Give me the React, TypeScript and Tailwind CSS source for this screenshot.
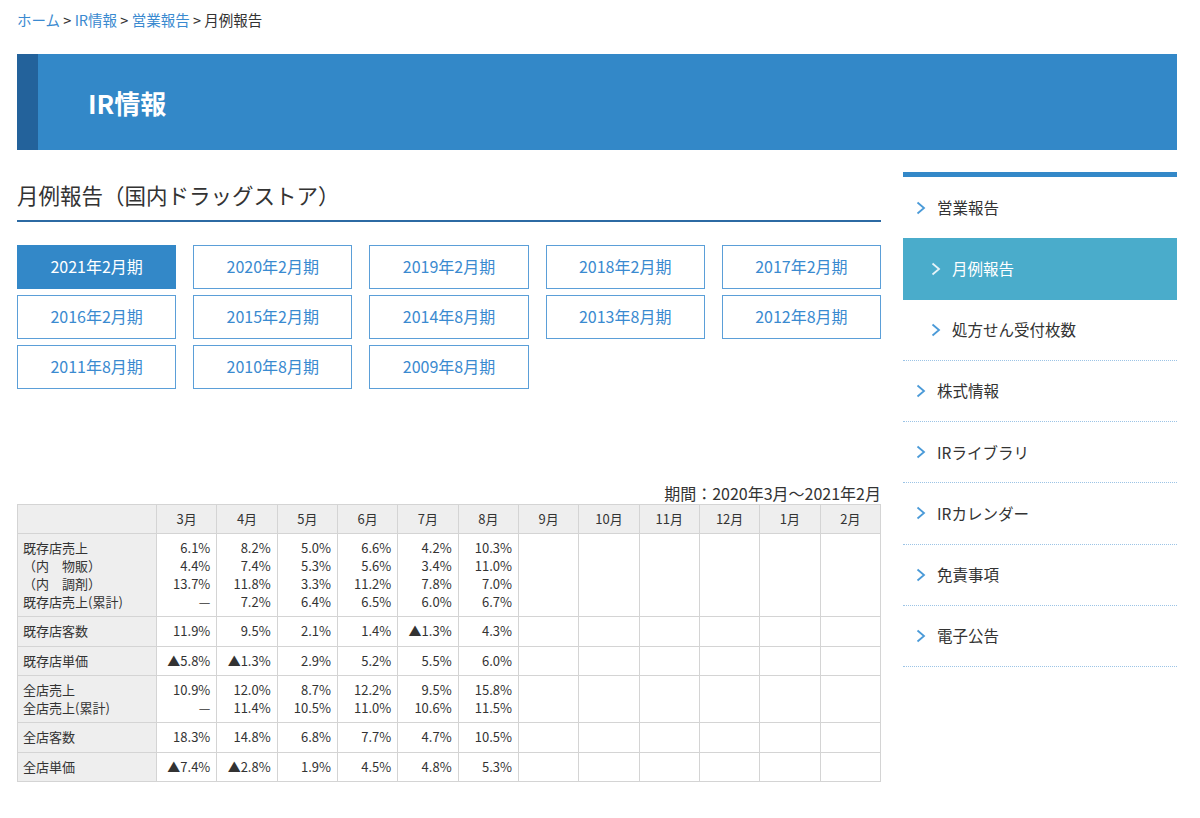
import React from 'react';

const years = [
  '2021年2月期', '2020年2月期', '2019年2月期', '2018年2月期', '2017年2月期',
  '2016年2月期', '2015年2月期', '2014年8月期', '2013年8月期', '2012年8月期',
  '2011年8月期', '2010年8月期', '2009年8月期',
];

const months = ['3月', '4月', '5月', '6月', '7月', '8月', '9月', '10月', '11月', '12月', '1月', '2月'];

const rows: { labels: string[]; values: string[][] }[] = [
  {
    labels: ['既存店売上', '（内　物販）', '（内　調剤）', '既存店売上(累計)'],
    values: [
      ['6.1%', '4.4%', '13.7%', '—'],
      ['8.2%', '7.4%', '11.8%', '7.2%'],
      ['5.0%', '5.3%', '3.3%', '6.4%'],
      ['6.6%', '5.6%', '11.2%', '6.5%'],
      ['4.2%', '3.4%', '7.8%', '6.0%'],
      ['10.3%', '11.0%', '7.0%', '6.7%'],
    ],
  },
  { labels: ['既存店客数'], values: [['11.9%'], ['9.5%'], ['2.1%'], ['1.4%'], ['▲1.3%'], ['4.3%']] },
  { labels: ['既存店単価'], values: [['▲5.8%'], ['▲1.3%'], ['2.9%'], ['5.2%'], ['5.5%'], ['6.0%']] },
  {
    labels: ['全店売上', '全店売上(累計)'],
    values: [['10.9%', '—'], ['12.0%', '11.4%'], ['8.7%', '10.5%'], ['12.2%', '11.0%'], ['9.5%', '10.6%'], ['15.8%', '11.5%']],
  },
  { labels: ['全店客数'], values: [['18.3%'], ['14.8%'], ['6.8%'], ['7.7%'], ['4.7%'], ['10.5%']] },
  { labels: ['全店単価'], values: [['▲7.4%'], ['▲2.8%'], ['1.9%'], ['4.5%'], ['4.8%'], ['5.3%']] },
];

const menu = [
  { label: '営業報告', sub: false, active: false, line: false },
  { label: '月例報告', sub: true, active: true, line: false },
  { label: '処方せん受付枚数', sub: true, active: false, line: true },
  { label: '株式情報', sub: false, active: false, line: true },
  { label: 'IRライブラリ', sub: false, active: false, line: true },
  { label: 'IRカレンダー', sub: false, active: false, line: true },
  { label: '免責事項', sub: false, active: false, line: true },
  { label: '電子公告', sub: false, active: false, line: true },
];

const Chevron = ({ color }: { color: string }) => (
  <svg width="10" height="14" viewBox="0 0 10 14" className="shrink-0">
    <path d="M1.5 1.5 L8 7 L1.5 12.5" fill="none" stroke={color} strokeWidth="1.8" />
  </svg>
);

export default function App() {
  return (
    <div className="w-[1200px] min-h-[818px] bg-white pl-[17px] text-[#333] font-['Noto_Sans_CJK_JP',sans-serif]">
      <div className="w-[1160px]">
        <div className="pt-[10px] h-[54px] text-[14.5px] leading-[20px]">
          <a className="text-[#3a8ad0]">ホーム</a> &gt; <a className="text-[#3a8ad0]">IR情報</a> &gt;{' '}
          <a className="text-[#3a8ad0]">営業報告</a> &gt; 月例報告
        </div>

        <div className="flex h-[96px] bg-[#3388c8]">
          <div className="w-[21px] bg-[#23629b]"></div>
          <h1 className="flex items-center pl-[50px] text-[26px] font-bold text-white">IR情報</h1>
        </div>

        <div className="flex gap-[22px] mt-[22px]">
          <main className="w-[864px]">
            <h2 className="h-[50px] pt-[7px] text-[21.5px] leading-[32px] border-b-2 border-[#2c6aa3]">
              月例報告（国内ドラッグストア）
            </h2>

            <div className="grid grid-cols-5 gap-x-[17px] gap-y-[6px] mt-[23px]">
              {years.map((y, i) => (
                <a
                  key={y}
                  className={`h-[44px] pb-[2px] flex items-center justify-center text-[16px] border ${
                    i === 0 ? 'bg-[#3388c8] border-[#3388c8] text-white' : 'border-[#5b9fd8] text-[#3a8ad0] bg-white'
                  }`}
                >
                  {y}
                </a>
              ))}
            </div>

            <p className="mt-[93px] text-right text-[16px] leading-[22px] h-[22px]">期間：2020年3月～2021年2月</p>

            <table className="w-full table-fixed border-collapse text-[13px] leading-[18px]">
              <colgroup>
                <col className="w-[139px]" />
              </colgroup>
              <thead>
                <tr className="bg-[#eeeeee] h-[29px]">
                  <th className="border border-[#d4d4d4]"></th>
                  {months.map(m => (
                    <th key={m} className="border border-[#d4d4d4] font-normal">{m}</th>
                  ))}
                </tr>
              </thead>
              <tbody>
                {rows.map((r, ri) => (
                  <tr key={ri} className="h-[29.5px]">
                    <td className="border border-[#d4d4d4] bg-[#eeeeee] px-[5px] py-[5px] align-top">
                      {r.labels.map(l => (
                        <div key={l}>{l}</div>
                      ))}
                    </td>
                    {months.map((m, mi) => (
                      <td key={m} className="border border-[#d4d4d4] px-[6px] py-[5px] text-right align-top">
                        {r.values[mi]?.map((v, vi) => (
                          <div key={vi}>{v}</div>
                        ))}
                      </td>
                    ))}
                  </tr>
                ))}
              </tbody>
            </table>
          </main>

          <aside className="w-[274px]">
            <div className="h-[5px] bg-[#3388c8]"></div>
            {menu.map(item => (
              <div
                key={item.label}
                className={`h-[61.25px] flex items-center gap-[11px] text-[15.5px] ${item.sub ? 'pl-[28px]' : 'pl-[13px]'} ${
                  item.active ? 'bg-[#4aaccb] text-white' : ''
                } ${item.line ? 'border-b border-dotted border-[#9cc4e6]' : ''}`}
              >
                <Chevron color={item.active ? '#e6f3f8' : '#4a9ad8'} />
                <span>{item.label}</span>
              </div>
            ))}
          </aside>
        </div>
      </div>
    </div>
  );
}
